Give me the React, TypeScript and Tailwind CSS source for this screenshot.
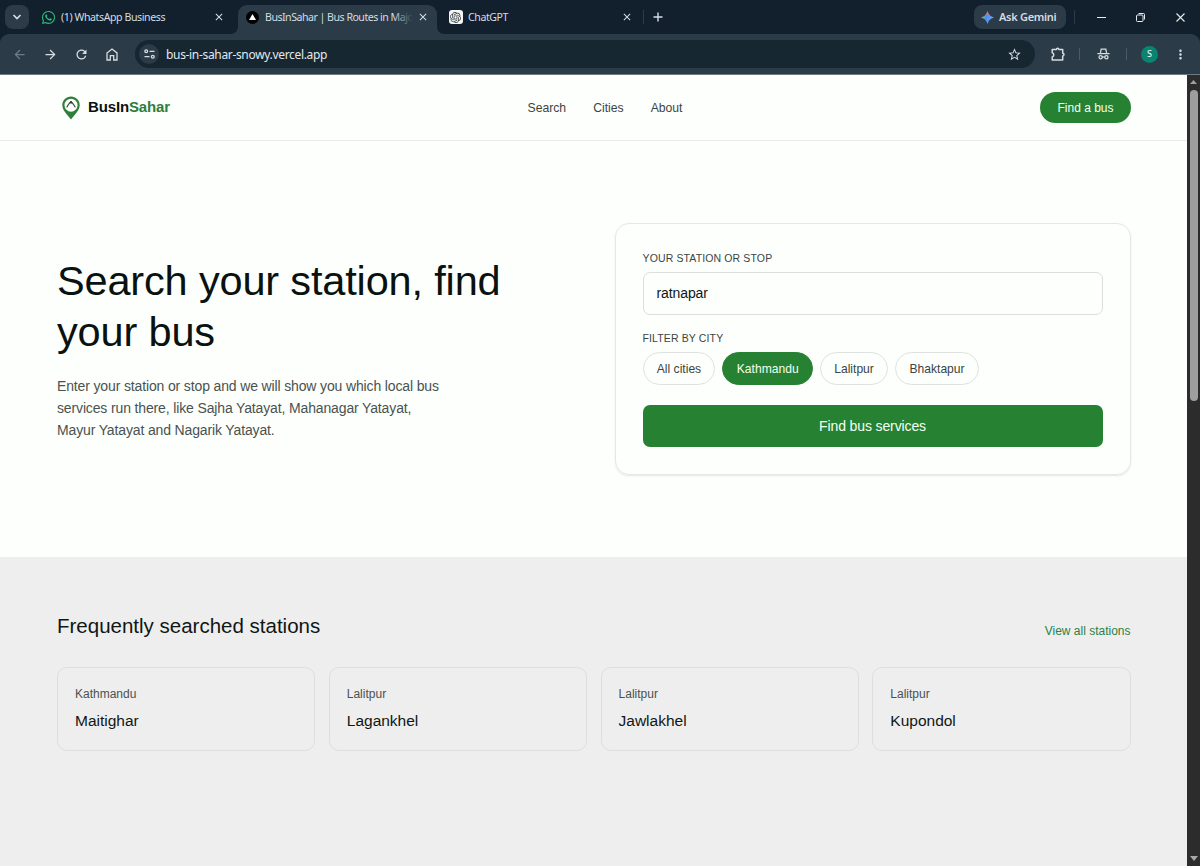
import { useState } from "react";
import type { ReactNode } from "react";
import { FaWhatsapp } from "react-icons/fa";
import { SiOpenai } from "react-icons/si";
import { MdArrowBack, MdArrowForward, MdClose, MdMoreVert, MdRefresh, MdStarBorder } from "react-icons/md";

const cities = ["All cities", "Kathmandu", "Lalitpur", "Bhaktapur"];

const stations = [
  { city: "Kathmandu", name: "Maitighar" },
  { city: "Lalitpur", name: "Lagankhel" },
  { city: "Lalitpur", name: "Jawlakhel" },
  { city: "Lalitpur", name: "Kupondol" },
];

const TuneIcon = () => (
  <svg width="11" height="10" viewBox="0 0 11 10" fill="none" stroke="currentColor" strokeWidth="1.3">
    <circle cx="2.2" cy="2.3" r="1.4" />
    <path d="M5.5 2.3h5M0.5 7.7h5" />
    <circle cx="8.8" cy="7.7" r="1.4" />
  </svg>
);

const HomeIcon = () => (
  <svg width="12" height="13" viewBox="0 0 12 13" fill="none" stroke="currentColor" strokeWidth="1.3">
    <path d="M1 4.9 6 1l5 3.9V12H7.700V7.600H4.300V12H1z" />
  </svg>
);

const ExtensionIcon = () => (
  <svg width="15" height="14" viewBox="0 0 15 14" fill="none" stroke="currentColor" strokeWidth="1.5" strokeLinejoin="round">
    <path d="M1.200 2.400h4.200c0-1.500 2.400-1.500 2.400 0h3.900v3.900c1.700 0 1.700 2.600 0 2.600V13H1.200V9.900c2.100-.4 2.100-3.700 0-4.100z" />
  </svg>
);

const GeminiIcon = () => (
  <svg width="13" height="13" viewBox="0 0 24 24">
    <defs>
      <linearGradient id="gemini" x1="0" y1="0" x2="1" y2="0.35">
        <stop offset="0" stopColor="#e8c344" />
        <stop offset="0.28" stopColor="#6fae7c" />
        <stop offset="0.5" stopColor="#4c8df6" />
        <stop offset="1" stopColor="#6ea3f5" />
      </linearGradient>
    </defs>
    <path
      d="M12 0c1.800 6.500 5.500 10.200 12 12-6.500 1.800-10.200 5.500-12 12-1.800-6.500-5.500-10.200-12-12C6.500 10.200 10.200 6.500 12 0z"
      fill="url(#gemini)"
    />
    <path d="M12 0c.9 3.200 2.200 5.800 4 7.600H8c1.800-1.800 3.100-4.400 4-7.600z" fill="#b97c86" />
  </svg>
);

const IncognitoIcon = () => (
  <svg width="13" height="12" viewBox="0 0 13 12" fill="none" stroke="currentColor" strokeWidth="1.3">
    <path d="M3.400 4.800 4.200 1.200h4.600l.8 3.600M0.400 5.600h12.200" />
    <circle cx="3.600" cy="9.200" r="1.600" />
    <circle cx="9.400" cy="9.200" r="1.600" />
    <path d="M5.200 9h2.600" />
  </svg>
);

const LogoPin = () => (
  <svg width="18" height="24" viewBox="0 0 18 24">
    <path
      d="M9 0.500C4.200 0.500 0.300 4.300 0.300 9c0 5.800 5.200 9.600 8.700 14.500C12.500 18.600 17.700 14.800 17.700 9 17.700 4.300 13.800 0.500 9 0.500z"
      fill="#2f7f3c"
    />
    <circle cx="9" cy="9.200" r="6.500" fill="#fdfffc" />
    <path d="M4.600 11.400C6 10.200 6.600 6.300 9 6.300s3 3.900 4.400 5.100" fill="none" stroke="#3c4f42" strokeWidth="1.2" />
    <circle cx="9" cy="6.200" r="1.200" fill="#27382c" />
  </svg>
);

interface TabProps {
  icon: ReactNode;
  title: string;
  className: string;
}

const Tab = ({ icon, title, className }: TabProps) => (
  <div className={`flex h-[29px] items-center pb-[5px] ${className}`}>
    <span className="flex w-[15px] shrink-0 items-center justify-center">{icon}</span>
    <span className="mt-px ml-[5px] flex-1 overflow-hidden whitespace-nowrap">{title}</span>
    <MdClose className="ml-1 size-[12px] shrink-0 text-[#d5dde2]" />
  </div>
);

const BrowserChrome = () => (
  <div className="h-[75px] shrink-0 bg-[#11202c] font-['Noto_Sans',sans-serif] text-[#d3dde3]">
    {/* Tab strip */}
    <div className="flex h-[34px] items-start pt-[5px] text-[10.6px] tracking-[-0.42px]">
      <div className="ml-[5px] flex size-6 items-center justify-center rounded-lg bg-[#2b3b47]">
        <svg width="10" height="6" viewBox="0 0 10 6" fill="none" stroke="currentColor" strokeWidth="1.7">
          <path d="M1.500 1 5 4.500 8.500 1" />
        </svg>
      </div>
      <Tab
        className="w-[209px] pr-[13px] pl-[12px]"
        icon={<FaWhatsapp className="size-[15px] text-[#2eb67d]" />}
        title="(1) WhatsApp Business"
      />
      <div className="relative w-[199px] rounded-t-[9px] bg-[#2b3b47]">
        <Tab
          className="pr-[8px] pl-[7px] tracking-[-0.5px]"
          icon={
            <span className="flex size-[13px] items-center justify-center rounded-full bg-black">
              <svg width="7" height="6" viewBox="0 0 7 6">
                <path d="M3.500 0 7 6H0z" fill="#fff" />
              </svg>
            </span>
          }
          title="BusInSahar | Bus Routes in Majo"
        />
        <div className="absolute top-0 right-[24px] h-6 w-5 bg-linear-to-r from-transparent to-[#2b3b47]" />
        <svg className="absolute bottom-0 -left-2" width="8" height="8" viewBox="0 0 8 8">
          <path d="M8 0v8H0c5 0 8-3 8-8z" fill="#2b3b47" />
        </svg>
        <svg className="absolute -right-2 bottom-0" width="8" height="8" viewBox="0 0 8 8">
          <path d="M0 0v8h8C3 8 0 5 0 0z" fill="#2b3b47" />
        </svg>
      </div>
      <Tab
        className="w-[206px] pr-[10px] pl-[11px]"
        icon={
          <span className="flex size-[14px] items-center justify-center rounded-[3px] bg-[#f4f6f6]">
            <SiOpenai className="size-[11px] text-[#333a3d]" />
          </span>
        }
        title="ChatGPT"
      />
      <div className="mt-[5px] h-[14px] w-px bg-[#2b3b47]" />
      <svg className="mt-[7px] ml-[9px]" width="10" height="10" viewBox="0 0 10 10" stroke="currentColor" strokeWidth="1.4">
        <path d="M5 0.500v9M0.500 5h9" />
      </svg>
      <div className="ml-auto flex h-6 w-[92px] items-center gap-[5px] rounded-lg bg-[#2b3b47] pl-[7px] text-[11px] font-semibold tracking-[-0.3px] whitespace-nowrap">
        <GeminiIcon />
        <span>Ask Gemini</span>
      </div>
      <div className="mt-[5px] ml-2 h-[14px] w-px bg-[#2b3b47]" />
      <div className="mr-[15px] ml-[22px] flex h-6 items-center text-[#e6ecef]">
        <svg width="9" height="9" viewBox="0 0 9 9" stroke="currentColor">
          <path d="M0 4.500h9" />
        </svg>
        <svg className="ml-[30px]" width="9" height="9" viewBox="0 0 9 9" fill="none" stroke="currentColor">
          <rect x="0.500" y="2" width="6.500" height="6.500" rx="1" />
          <path d="M2.500 0.500h5a1 1 0 0 1 1 1v5" />
        </svg>
        <svg className="ml-[31px]" width="9" height="9" viewBox="0 0 9 9" stroke="currentColor" strokeWidth="1.1">
          <path d="M0.500 0.500l8 8M8.500 0.500l-8 8" />
        </svg>
      </div>
    </div>

    {/* Toolbar */}
    <div className="flex h-[41px] items-center rounded-t-[9px] border-b border-[#6c7a83] bg-[#2b3b47]">
      <MdArrowBack className="ml-[12px] size-[15px] text-[#6f7d87]" />
      <MdArrowForward className="ml-[16px] size-[15px]" />
      <MdRefresh className="ml-[16px] size-[15px]" />
      <div className="ml-[17px]">
        <HomeIcon />
      </div>
      <div className="ml-[17px] flex h-7 w-[900px] items-center rounded-full bg-[#162732] pr-[13px] pl-1">
        <div className="flex size-5 items-center justify-center rounded-full bg-[#2b3b47]">
          <TuneIcon />
        </div>
        <span className="mt-px ml-[7px] text-[12px] tracking-[-0.33px] text-[#e2e9ed]">
          bus-in-sahar-snowy.vercel.app
        </span>
        <MdStarBorder className="ml-auto size-[15px]" />
      </div>
      <div className="ml-[16px]">
        <ExtensionIcon />
      </div>
      <div className="ml-[13px] h-3 w-px bg-[#4b5a65]" />
      <div className="ml-[17px]">
        <IncognitoIcon />
      </div>
      <div className="ml-4 h-3 w-px bg-[#4b5a65]" />
      <div className="ml-[14px] flex size-[17px] items-center justify-center rounded-full bg-[#0a8371] text-[9px] text-white">
        S
      </div>
      <MdMoreVert className="ml-[15px] size-[15px]" />
    </div>
  </div>
);

const Header = () => (
  <header className="flex h-[66px] shrink-0 items-center justify-between border-b border-[#e9ebe9] pr-14 pl-[62px]">
    <div className="flex w-[230px] items-center gap-2">
      <LogoPin />
      <span className="text-[15px] font-bold tracking-[-0.15px] text-[#0a120f]">
        BusIn<span className="text-[#2d7d3a]">Sahar</span>
      </span>
    </div>
    <nav className="flex gap-[27px] pt-px pl-[11px] text-[12.2px] text-[#3c4441]">
      <a>Search</a>
      <a>Cities</a>
      <a>About</a>
    </nav>
    <div className="flex w-[224px] justify-end">
      <button className="h-[31px] w-[91px] rounded-full bg-[#268232] text-[12px] text-[#f3fff2]">Find a bus</button>
    </div>
  </header>
);

const SearchCard = () => {
  const [station, setStation] = useState("ratnapar");
  const [city, setCity] = useState("Kathmandu");

  return (
    <div className="h-[252px] rounded-[14px] border border-[#e6e8e6] px-[27px] pt-[27px] shadow-[0_1px_2px_rgba(0,0,0,0.1)]">
      <label className="block text-[10.5px] leading-[14px] tracking-[0.13px] text-[#3c4441]">
        YOUR STATION OR STOP
      </label>
      <input
        value={station}
        onChange={(e) => setStation(e.target.value)}
        className="mt-[7px] block h-[43px] w-full rounded-[7px] border border-[#dbdedb] px-[13px] pb-[2px] text-[14px] tracking-[-0.1px] text-[#0f1714] outline-none"
      />
      <p className="mt-4 text-[10.5px] leading-[14px] tracking-[0.13px] text-[#3c4441]">FILTER BY CITY</p>
      <div className="mt-[7px] flex gap-[7px]">
        {cities.map((c) => (
          <button
            key={c}
            onClick={() => setCity(c)}
            className={`h-[33px] rounded-full border px-[13.3px] pt-px text-[12.1px] ${
              c === city ? "border-[#268232] bg-[#268232] text-[#f3fff2]" : "border-[#dfe2df] text-[#3c4441]"
            }`}
          >
            {c}
          </button>
        ))}
      </div>
      <button className="mt-5 h-[42px] w-full rounded-[7px] bg-[#268232] text-[14px] tracking-[-0.12px] text-[#f3fff2]">
        Find bus services
      </button>
    </div>
  );
};

const Hero = () => (
  <section className="grid h-[416px] shrink-0 grid-cols-[516px_516px] items-center gap-[41.5px] px-[57px]">
    <div className="pb-[2px]">
      <h1 className="text-[41.5px] leading-[51.5px] tracking-[-0.16px] whitespace-nowrap text-[#0a120f]">
        Search your station, find
        <br />
        your bus
      </h1>
      <p className="mt-[17px] w-[390px] text-[14px] leading-[22.3px] tracking-[-0.14px] text-[#4a524f]">
        Enter your station or stop and we will show you which local bus services run there, like Sajha Yatayat,
        Mahanagar Yatayat, Mayur Yatayat and Nagarik Yatayat.
      </p>
    </div>
    <SearchCard />
  </section>
);

const Stations = () => (
  <section className="flex-1 bg-[#eeeeee] pt-[55px] pr-[56.5px] pl-[57px]">
    <div className="flex h-7 items-end justify-between">
      <h2 className="text-[20.5px] leading-7 text-[#0f1714]">Frequently searched stations</h2>
      <a className="text-[12px] leading-[18px] text-[#2f7f43]">View all stations</a>
    </div>
    <div className="mt-[27px] grid grid-cols-4 gap-[13.6px]">
      {stations.map((s) => (
        <div key={s.name} className="h-[84px] rounded-[10px] border border-[#dddfdf] px-[17px] pt-[17px]">
          <p className="text-[12px] leading-[18px] text-[#4a524f]">{s.city}</p>
          <p className="mt-2 text-[15.5px] leading-5 text-[#0f1714]">{s.name}</p>
        </div>
      ))}
    </div>
  </section>
);

const Scrollbar = () => (
  <div className="flex w-[13px] shrink-0 flex-col items-center bg-[#2c2c2c] pt-[5px] pb-[5px]">
    <svg width="7" height="4" viewBox="0 0 7 4">
      <path d="M3.500 0 7 4H0z" fill="#a0a0a0" />
    </svg>
    <div className="mt-[6px] h-[311px] w-2 rounded-full bg-[#9e9e9e]" />
    <svg className="mt-auto" width="8" height="5" viewBox="0 0 8 5">
      <path d="M4 5 8 0H0z" fill="#a8a8a8" />
    </svg>
  </div>
);

export default function App() {
  return (
    <div className="flex h-[866px] w-[1200px] flex-col overflow-hidden font-['Liberation_Sans',Arial,sans-serif]">
      <BrowserChrome />
      <div className="flex min-h-0 flex-1">
        <main className="flex w-[1187px] flex-col bg-[#fdfffd]">
          <Header />
          <Hero />
          <Stations />
        </main>
        <Scrollbar />
      </div>
    </div>
  );
}
